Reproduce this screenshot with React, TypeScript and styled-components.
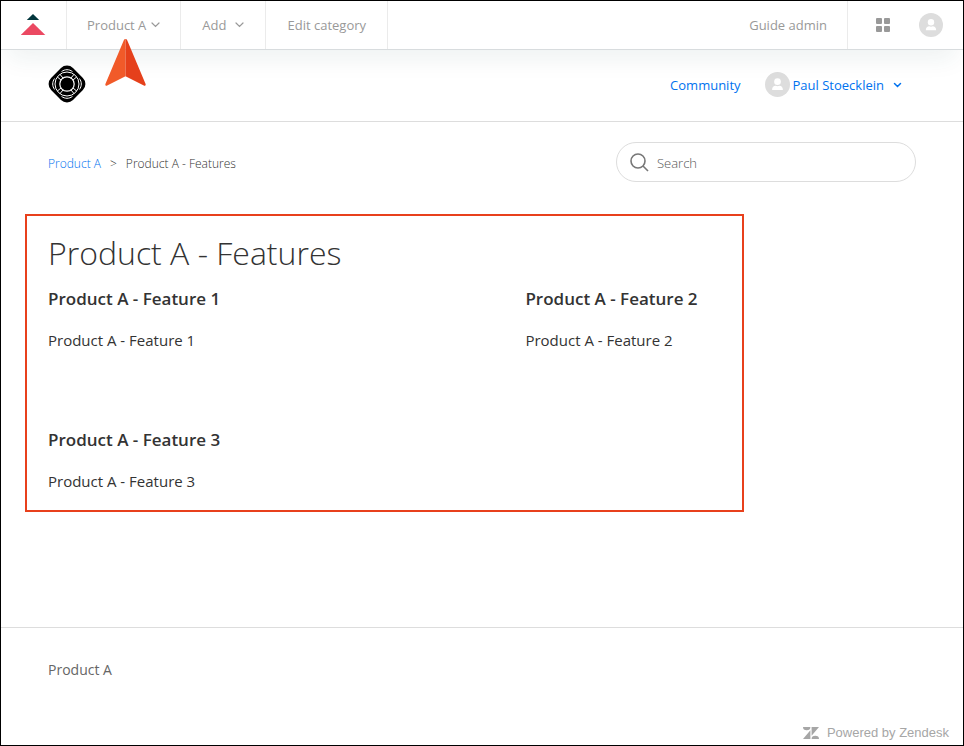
import React from 'react';
import styled, { createGlobalStyle } from 'styled-components';

const GlobalStyle = createGlobalStyle`
  *, *::before, *::after { box-sizing: border-box; }
  body {
    margin: 0;
    background: #fff;
    color: #333;
    font-family: "Open Sans", "Noto Sans", sans-serif;
    font-size: 15px;
  }
  h1, h2, p { margin: 0; }
  a { color: inherit; text-decoration: none; }
  svg { display: block; flex: none; }
`;

const Page = styled.div`
  display: flex;
  flex-direction: column;
  min-height: 100vh;
  border: 1px solid #000;
`;

const AdminBar = styled.nav`
  position: relative;
  display: flex;
  height: 49px;
  border-bottom: 1px solid #d8dcde;
  box-shadow: 0 16px 24px -8px rgba(23, 73, 77, 0.08);
  color: #999;
  font-size: 13px;
`;

const BarCell = styled.div<{ $pad?: number }>`
  position: relative;
  display: flex;
  align-items: center;
  padding: 0 ${(p) => p.$pad ?? 20}px;
  border-right: 1px solid #ebebeb;
`;

const BarButton = styled.button<{ $gap?: number }>`
  display: flex;
  align-items: center;
  gap: ${(p) => p.$gap ?? 5}px;
  padding: 0;
  border: 0;
  background: none;
  color: inherit;
  font: inherit;
  white-space: nowrap;
  cursor: pointer;
`;

const BarEnd = styled.div`
  display: flex;
  align-items: center;
  gap: 29px;
  padding: 0 20px 0 28px;
`;

const Spacer = styled.div`
  flex: 1;
`;

const Pointer = styled.svg`
  position: absolute;
  top: 37px;
  left: 38px;
  z-index: 2;
`;

const SiteHeader = styled.header`
  display: flex;
  align-items: center;
  justify-content: space-between;
  height: 72px;
  padding: 0 61px 4px 46px;
  border-bottom: 1px solid #ddd;
`;

const HeaderLinks = styled.div`
  display: flex;
  align-items: center;
  gap: 24px;
  padding-top: 2px;
  color: #0072ef;
  font-size: 13px;
`;

const UserButton = styled(BarButton)`
  color: #0072ef;
`;

const UserName = styled.span`
  margin-left: -2px;
  margin-right: 4px;
`;

const Main = styled.main`
  flex: 1;
  padding: 20px 47px 0;
`;

const SubNav = styled.div`
  display: flex;
  align-items: center;
  justify-content: space-between;
  height: 40px;
`;

const Breadcrumbs = styled.ol`
  display: flex;
  gap: 9px;
  margin: 0;
  padding: 2px 0 0;
  list-style: none;
  font-size: 12px;
  font-weight: 300;
  color: #333;
`;

const CrumbLink = styled.a`
  color: #0072ef;
`;

const SearchBox = styled.label`
  display: flex;
  align-items: center;
  gap: 8px;
  width: 300px;
  height: 40px;
  padding: 0 16px 0 13px;
  border: 1px solid #ddd;
  border-radius: 20px;
`;

const SearchInput = styled.input`
  flex: 1;
  min-width: 0;
  padding: 2px 0 0;
  border: 0;
  outline: 0;
  background: none;
  font: 300 13px "Open Sans", "Noto Sans", sans-serif;
  color: #333;
  &::placeholder { color: #555; opacity: 1; }
`;

const Category = styled.section`
  position: relative;
  margin-top: 32px;
  padding: 16px 0 19px;
  &::after {
    content: "";
    position: absolute;
    inset: 0 172px 0 -23px;
    border: 2px solid #e8401c;
    pointer-events: none;
  }
`;

const Title = styled.h1`
  font-size: 32px;
  line-height: 46px;
  font-weight: 300;
`;

const Features = styled.div`
  display: grid;
  grid-template-columns: 45% 45%;
  justify-content: space-between;
  row-gap: 76px;
  padding-top: 11px;
`;

const FeatureTitle = styled.h2`
  font-size: 17px;
  line-height: 24px;
  font-weight: 600;
`;

const FeatureText = styled.p`
  margin-top: 17px;
  line-height: 24px;
`;

const Footer = styled.footer`
  display: flex;
  flex-direction: column;
  justify-content: space-between;
  height: 118px;
  padding: 30px 14px 1px 47px;
  border-top: 1px solid #ddd;
  color: #666;
  font-size: 14px;
  line-height: 24px;
`;

const Powered = styled.a`
  display: flex;
  align-items: center;
  align-self: flex-end;
  gap: 8px;
  color: #a6a6a6;
  font: 13px/22px "Liberation Sans", Arial, sans-serif;
`;

const Chevron = ({ bold = false }: { bold?: boolean }) => (
  <svg
    width="9"
    height="6"
    viewBox="0 0 9 6"
    fill="none"
    stroke="currentColor"
    strokeWidth={bold ? 1.5 : 1.2}
    strokeLinecap="round"
  >
    <path d={bold ? 'M1.500 1.500l3 3 3-3' : 'M1 1l3.500 3.500L8 1'} />
  </svg>
);

const Avatar = ({ size }: { size: number }) => (
  <svg width={size} height={size} viewBox="0 0 24 24">
    <circle cx="12" cy="12" r="12" fill="#ddd" />
    <circle cx="12" cy="9.300" r="3.200" fill="#fff" />
    <path d="M6.800 17.300c0-2.600 1.600-4 3.400-4 .9.600 2.700.6 3.600 0 1.800 0 3.400 1.400 3.400 4z" fill="#fff" />
  </svg>
);

const GuideLogo = () => (
  <svg width="25" height="22" viewBox="0 0 25 22">
    <path d="M12 0l6.200 6H5.800z" fill="#03363d" />
    <path d="M12 9l12.300 12H-.3z" fill="#eb4962" />
  </svg>
);

const AppsIcon = () => (
  <svg width="14" height="14" viewBox="0 0 14 14" fill="#999">
    <rect width="6" height="6" rx="1" />
    <rect x="8" width="6" height="6" rx="1" />
    <rect y="8" width="6" height="6" rx="1" />
    <rect x="8" y="8" width="6" height="6" rx="1" />
  </svg>
);

const BrandLogo = () => (
  <svg width="40" height="38" viewBox="-1 0 40 38" fill="none" stroke="#fff" strokeWidth="1">
    <rect x="3.500" y="3.500" width="31" height="31" rx="8.500" fill="#000" stroke="none" transform="rotate(45 19 19)" />
    <circle cx="19" cy="19" r="12" />
    <circle cx="19" cy="19" r="7.200" strokeWidth="1.200" />
    <path d="M13.500 6.600c1.700-1.200 3.500-1.900 5.500-1.900s3.800.7 5.500 1.900M13.500 31.400c1.700 1.200 3.500 1.900 5.500 1.900s3.800-.7 5.500-1.900M6.600 13.500C5.400 15.200 4.700 17 4.700 19s.7 3.800 1.900 5.500M31.400 13.500c1.200 1.700 1.900 3.500 1.900 5.500s-.7 3.800-1.900 5.500" />
    <path d="M9.400 12l3.800 3.200M12 9.400l3.200 3.800M28.600 12l-3.800 3.200M26 9.400l-3.200 3.800M9.400 26l3.800-3.200M12 28.600l3.200-3.800M28.600 26l-3.800-3.200M26 28.600l-3.200-3.800" />
  </svg>
);

const ZendeskMark = () => (
  <svg width="16" height="12" viewBox="0 0 16 12" fill="#a6a6a6">
    <path d="M7.400 3.200V12H0zM7.400 0a3.700 3.200 0 0 1-7.400 0zM8.600 12a3.700 3.200 0 0 1 7.400 0zM8.600 8.800V0H16z" />
  </svg>
);

const features = ['Product A - Feature 1', 'Product A - Feature 2', 'Product A - Feature 3'];

export default function App() {
  return (
    <>
      <GlobalStyle />
      <Page>
        <AdminBar>
          <BarCell>
            <a href="#guide" aria-label="Guide home"><GuideLogo /></a>
          </BarCell>
          <BarCell>
            <BarButton>Product A <Chevron /></BarButton>
            <Pointer width="42" height="50" viewBox="0 0 42 50">
              <path d="M20.500 1c-.9 0-1.500.7-1.900 1.700L.4 46c-.4 1.200.5 2.200 1.800 1.600l18.300-9.300z" fill="#f15a29" />
              <path d="M20.500 1c.9 0 1.500.7 1.900 1.700L40.600 46c.4 1.200-.5 2.200-1.800 1.600l-18.300-9.300z" fill="#e5401b" />
            </Pointer>
          </BarCell>
          <BarCell $pad={21}>
            <BarButton $gap={9}>Add <Chevron /></BarButton>
          </BarCell>
          <BarCell $pad={21}>
            <a href="#edit">Edit category</a>
          </BarCell>
          <Spacer />
          <BarCell>
            <a href="#admin">Guide admin</a>
          </BarCell>
          <BarEnd>
            <BarButton aria-label="Products"><AppsIcon /></BarButton>
            <BarButton aria-label="Profile"><Avatar size={24} /></BarButton>
          </BarEnd>
        </AdminBar>

        <SiteHeader>
          <a href="#home" aria-label="Home"><BrandLogo /></a>
          <HeaderLinks>
            <a href="#community">Community</a>
            <UserButton>
              <Avatar size={25} />
              <UserName>Paul Stoecklein</UserName>
              <Chevron bold />
            </UserButton>
          </HeaderLinks>
        </SiteHeader>

        <Main>
          <SubNav>
            <Breadcrumbs>
              <li><CrumbLink href="#product-a">Product A</CrumbLink></li>
              <li aria-hidden="true">&gt;</li>
              <li>Product A - Features</li>
            </Breadcrumbs>
            <SearchBox>
              <svg width="19" height="19" viewBox="0 0 19 19" fill="none" stroke="#777" strokeWidth="1.600">
                <circle cx="8" cy="8" r="7" />
                <path d="M13 13l5 5" />
              </svg>
              <SearchInput type="search" placeholder="Search" aria-label="Search" />
            </SearchBox>
          </SubNav>

          <Category>
            <Title>Product A - Features</Title>
            <Features>
              {features.map((name) => (
                <article key={name}>
                  <FeatureTitle>{name}</FeatureTitle>
                  <FeatureText>{name}</FeatureText>
                </article>
              ))}
            </Features>
          </Category>
        </Main>

        <Footer>
          <a href="#product-a">Product A</a>
          <Powered href="#zendesk"><ZendeskMark /> Powered by Zendesk</Powered>
        </Footer>
      </Page>
    </>
  );
}
